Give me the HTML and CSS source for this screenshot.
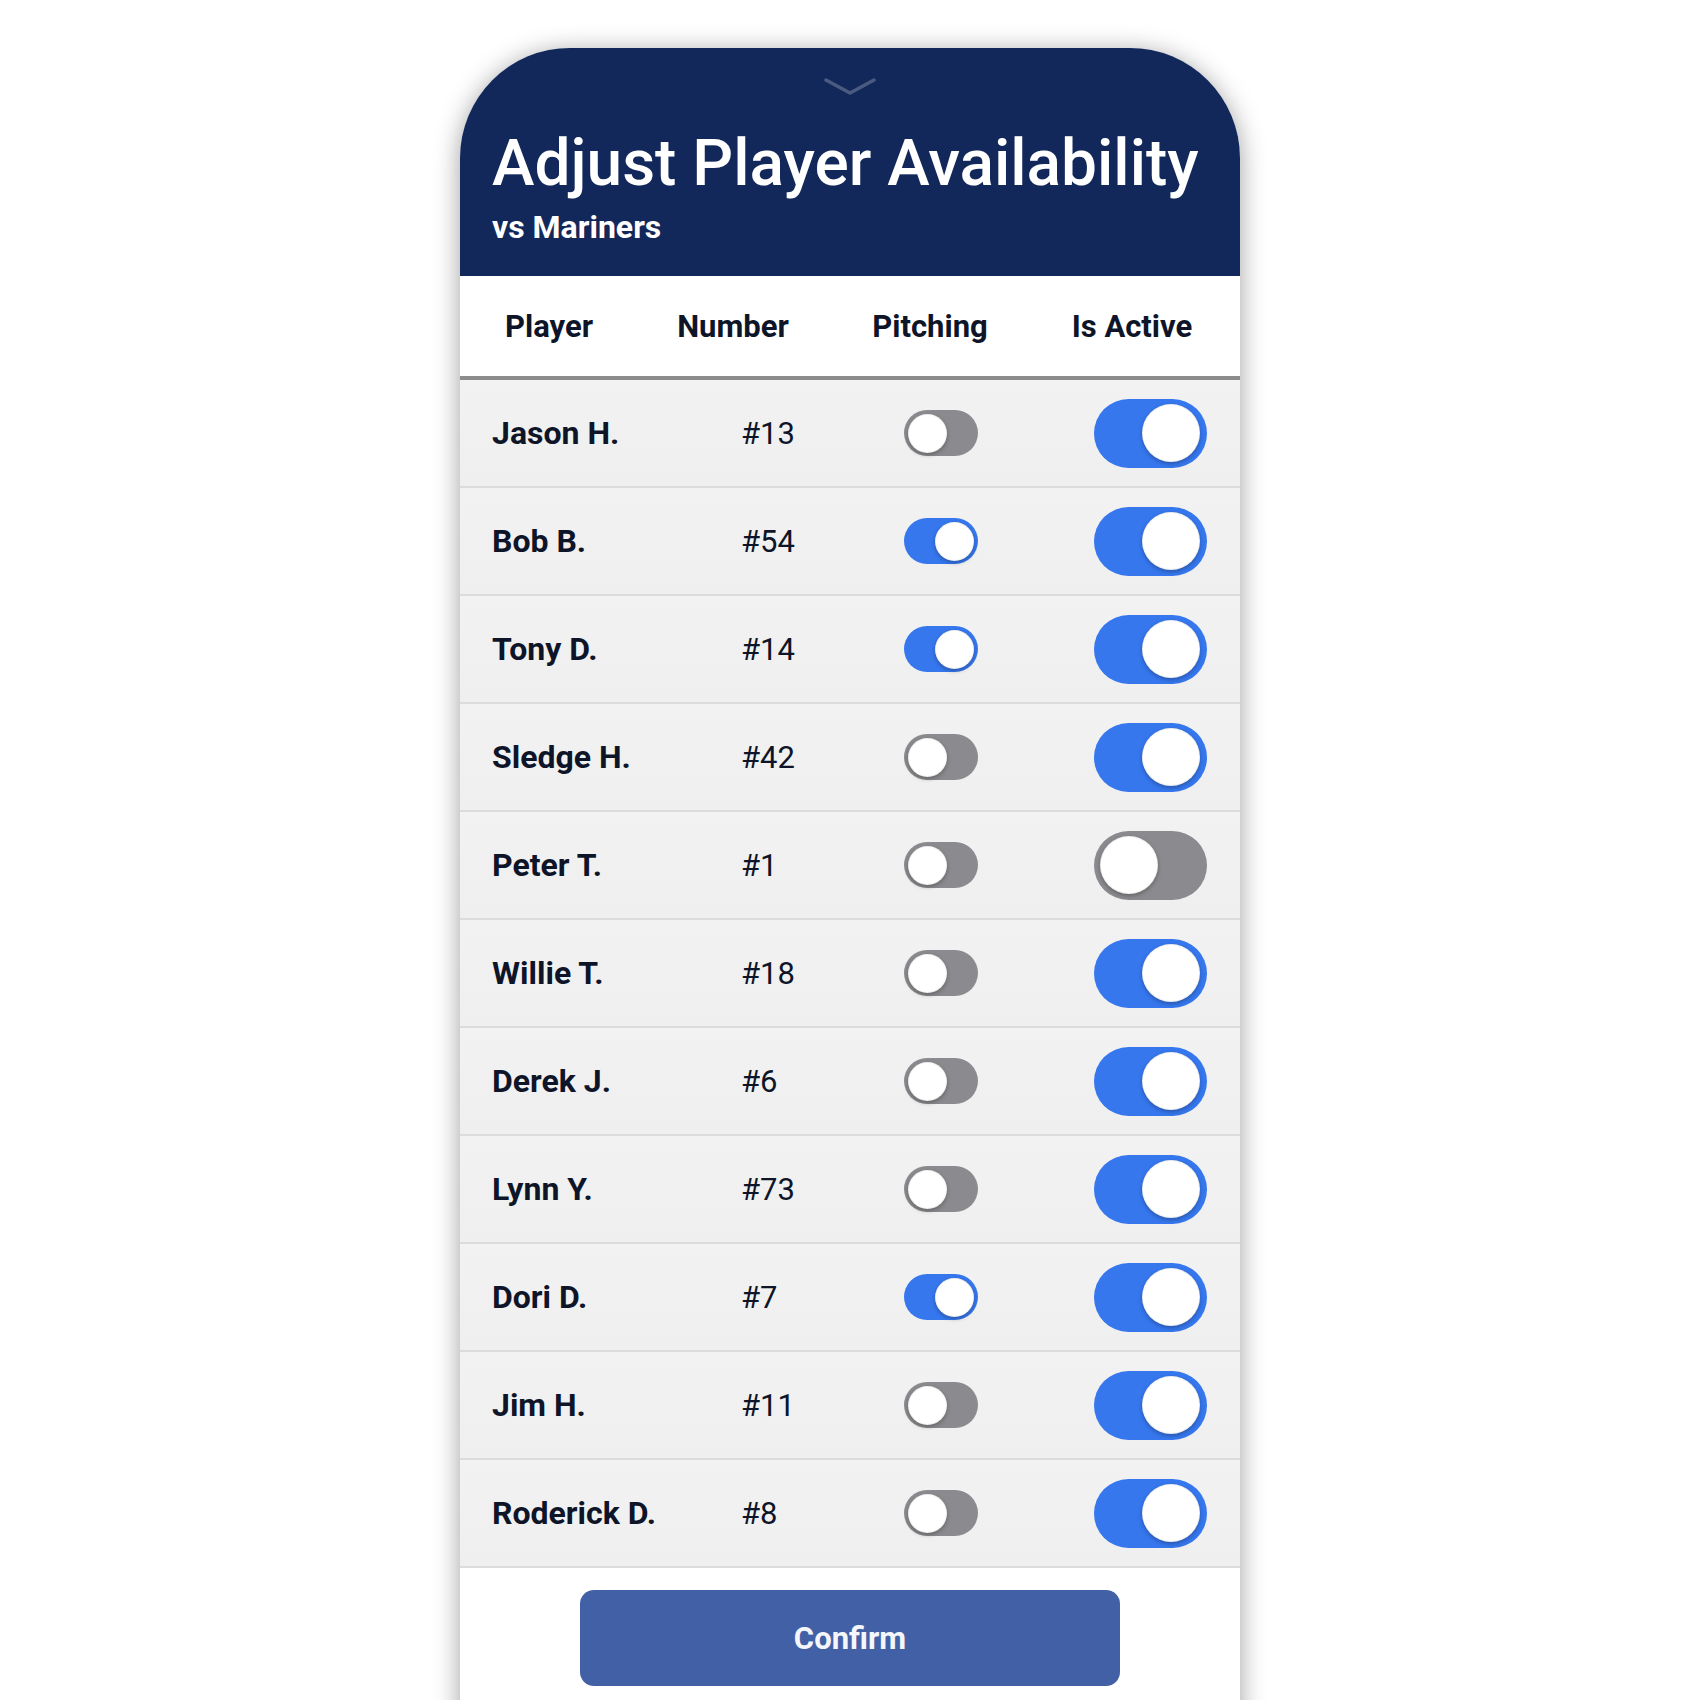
FILE: index.html
```html
<!DOCTYPE html>
<html>
<head>
<meta charset="utf-8">
<link rel="stylesheet" href="styles.css">
</head>
<body>
<div class="card">
  <div class="top">
    <svg class="chev" width="52" height="18" viewBox="0 0 52 18"><polyline points="2,2 26,15 50,2" fill="none" stroke="#4a5b80" stroke-width="3.5" stroke-linejoin="round" stroke-linecap="round"/></svg>
    <h1 class="title">Adjust Player Availability</h1>
    <div class="subtitle">vs Mariners</div>
  </div>
  <div class="heads">
    <div class="hcell">Player</div>
    <div class="hcell">Number</div>
    <div class="hcell">Pitching</div>
    <div class="hcell">Is Active</div>
  </div>
  <div class="rows">
    <div class="row"><span class="name">Jason H.</span><span class="num">#13</span><span class="sw sm"><i></i></span><span class="sw lg on"><i></i></span></div>
    <div class="row"><span class="name">Bob B.</span><span class="num">#54</span><span class="sw sm on"><i></i></span><span class="sw lg on"><i></i></span></div>
    <div class="row"><span class="name">Tony D.</span><span class="num">#14</span><span class="sw sm on"><i></i></span><span class="sw lg on"><i></i></span></div>
    <div class="row"><span class="name">Sledge H.</span><span class="num">#42</span><span class="sw sm"><i></i></span><span class="sw lg on"><i></i></span></div>
    <div class="row"><span class="name">Peter T.</span><span class="num">#1</span><span class="sw sm"><i></i></span><span class="sw lg"><i></i></span></div>
    <div class="row"><span class="name">Willie T.</span><span class="num">#18</span><span class="sw sm"><i></i></span><span class="sw lg on"><i></i></span></div>
    <div class="row"><span class="name">Derek J.</span><span class="num">#6</span><span class="sw sm"><i></i></span><span class="sw lg on"><i></i></span></div>
    <div class="row"><span class="name">Lynn Y.</span><span class="num">#73</span><span class="sw sm"><i></i></span><span class="sw lg on"><i></i></span></div>
    <div class="row"><span class="name">Dori D.</span><span class="num">#7</span><span class="sw sm on"><i></i></span><span class="sw lg on"><i></i></span></div>
    <div class="row"><span class="name">Jim H.</span><span class="num">#11</span><span class="sw sm"><i></i></span><span class="sw lg on"><i></i></span></div>
    <div class="row"><span class="name">Roderick D.</span><span class="num">#8</span><span class="sw sm"><i></i></span><span class="sw lg on"><i></i></span></div>
  </div>
  <div class="foot">
    <button class="confirm">Confirm</button>
  </div>
</div>
</body>
</html>
```
FILE: styles.css
```css
html, body {
  margin: 0;
  padding: 0;
  background: #ffffff;
}
body {
  font-family: Roboto, "Noto Sans", sans-serif;
  color: #0e1528;
  height: 1700px;
  overflow: hidden;
}
.card {
  width: 780px;
  margin: 48px auto 0;
  border-radius: 110px 110px 0 0;
  overflow: hidden;
  background: #ffffff;
  box-shadow: 0 4px 26px rgba(0, 0, 0, 0.38);
}
.top {
  background: #13285a;
  height: 228px;
  box-sizing: border-box;
  padding: 30px 32px 0;
  display: flex;
  flex-direction: column;
  align-items: flex-start;
}
.chev {
  align-self: center;
  display: block;
}
.title {
  margin: 30px 0 0;
  font-size: 64px;
  font-weight: 500;
  color: #ffffff;
  line-height: 76px;
  letter-spacing: 0;
}
.subtitle {
  margin-top: 6px;
  font-size: 32px;
  font-weight: 700;
  color: #ffffff;
  line-height: 38px;
}
.heads {
  display: grid;
  grid-template-columns: 178px 190px 204px 200px;
  height: 100px;
  align-items: center;
  border-bottom: 4px solid #8c8c8c;
  background: #ffffff;
}
.hcell {
  text-align: center;
  font-size: 31px;
  font-weight: 700;
  color: #0e1528;
}
.row {
  display: grid;
  grid-template-columns: 249px 163px 1fr auto;
  align-items: center;
  height: 106px;
  padding: 0 33px 0 32px;
  background: linear-gradient(#f2f2f2, #efefef);
  border-bottom: 2px solid #dcdcdc;
}
.name {
  font-size: 32px;
  font-weight: 700;
}
.num {
  font-size: 31px;
  font-weight: 400;
}
.sw {
  position: relative;
  display: block;
  box-sizing: border-box;
  background: #8b8b8f;
  border-radius: 40px;
}
.sw i {
  position: absolute;
  top: 50%;
  background: #ffffff;
  border-radius: 50%;
  box-shadow: 0 2px 4px rgba(0, 0, 0, 0.28), inset 0 0 0 1px rgba(0, 0, 0, 0.06);
}
.sw.on {
  background: #3677ee;
}
.sm {
  width: 74px;
  height: 46px;
}
.sm i {
  width: 39px;
  height: 39px;
  margin-top: -19.5px;
  left: 4px;
}
.sm.on i {
  left: auto;
  right: 4px;
}
.lg {
  width: 113px;
  height: 69px;
}
.lg i {
  width: 58px;
  height: 58px;
  margin-top: -29px;
  left: 6px;
}
.lg.on i {
  left: auto;
  right: 7px;
}
.foot {
  height: 200px;
  padding-top: 22px;
  display: flex;
  justify-content: center;
  align-items: flex-start;
  box-sizing: border-box;
}
.confirm {
  width: 540px;
  height: 96px;
  border: none;
  border-radius: 14px;
  background: #4260a6;
  color: #f5f6fa;
  font-family: Roboto, "Noto Sans", sans-serif;
  font-size: 31px;
  font-weight: 700;
}
```
